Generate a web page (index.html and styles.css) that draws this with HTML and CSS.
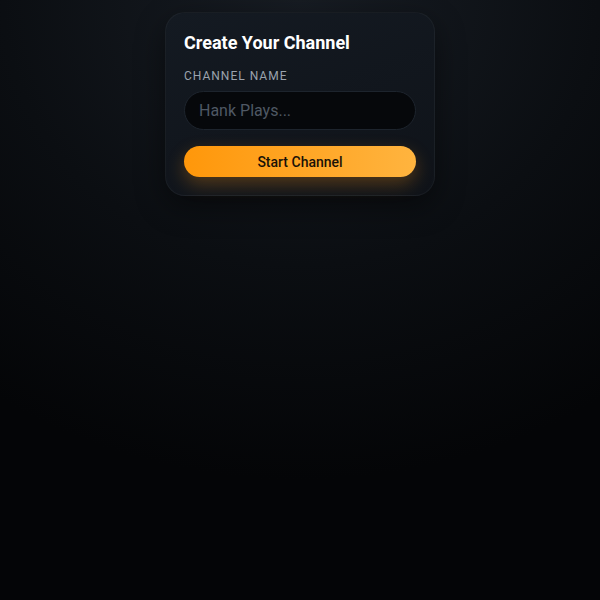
FILE: index.html
```html
<!DOCTYPE html>
<html>
<head>
<meta charset="utf-8">
<link rel="stylesheet" href="styles.css">
</head>
<body>
<div class="page">
  <div class="card">
    <h1 class="title">Create Your Channel</h1>
    <label class="label" for="name">CHANNEL NAME</label>
    <input class="input" id="name" type="text" placeholder="Hank Plays...">
    <button class="btn">Start Channel</button>
  </div>
</div>
</body>
</html>
```
FILE: styles.css
```css
html, body {
  margin: 0;
  height: 100%;
}
body {
  background: radial-gradient(ellipse 90% 80% at 50% 0%, #171c23 0%, #0b0e12 55%, #040507 100%);
  background-color: #040507;
  font-family: Roboto, "Noto Sans", sans-serif;
}
.page {
  display: flex;
  justify-content: center;
  padding-top: 12px;
}
.card {
  width: 270px;
  box-sizing: border-box;
  padding: 18px 18px 18px 18px;
  border-radius: 20px;
  background: linear-gradient(160deg, #141a22 0%, #0f1319 100%);
  border: 1px solid rgba(255,255,255,0.04);
  box-shadow: 0 10px 30px rgba(0,0,0,0.45);
  display: flex;
  flex-direction: column;
}
.title {
  margin: 0;
  font-size: 18px;
  font-weight: 700;
  color: #ffffff;
  line-height: 24px;
}
.label {
  margin-top: 14px;
  font-size: 12px;
  letter-spacing: 1px;
  color: #9ba3ad;
  line-height: 14px;
}
.input {
  margin-top: 8px;
  height: 39px;
  box-sizing: border-box;
  border-radius: 20px;
  border: 1px solid #1d242d;
  background: #06080b;
  padding: 0 14px;
  font-family: Roboto, "Noto Sans", sans-serif;
  font-size: 16px;
  color: #e5e7eb;
  outline: none;
}
.input::placeholder {
  color: #4f5864;
}
.btn {
  margin-top: 16px;
  height: 31px;
  border: none;
  border-radius: 16px;
  background: linear-gradient(90deg, #ff970a 0%, #ffb43f 100%);
  color: #1a1207;
  font-family: Roboto, "Noto Sans", sans-serif;
  font-size: 14px;
  font-weight: 500;
  box-shadow: 0 7px 18px rgba(255,150,20,0.28);
}
```
